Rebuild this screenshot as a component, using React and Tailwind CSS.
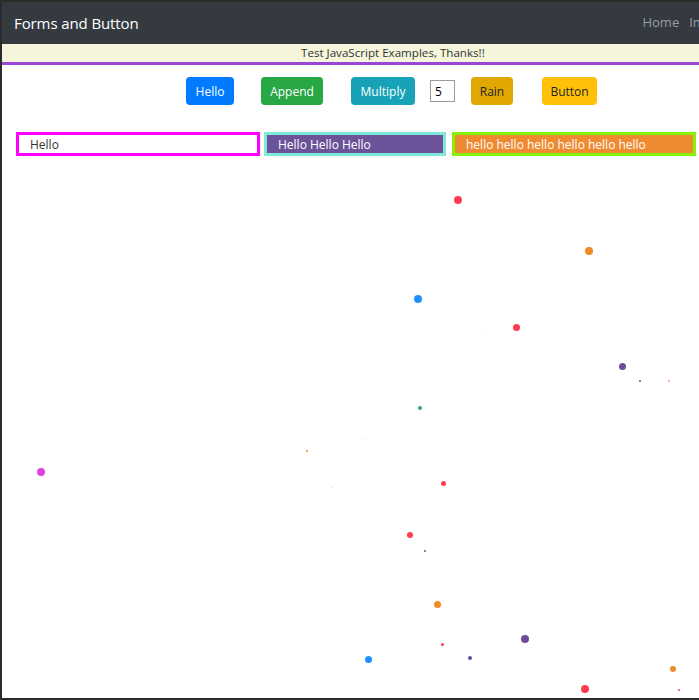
import React from 'react'

const dots = [
  { x: 458, y: 200, s: 8, c: '#ff3b50' },
  { x: 589, y: 251, s: 8, c: '#ef8a26' },
  { x: 418, y: 299, s: 8, c: '#1e90ff' },
  { x: 516, y: 327, s: 7, c: '#ff3b50' },
  { x: 481, y: 330, s: 1, c: '#d9c6ea' },
  { x: 622, y: 366, s: 7, c: '#6b4c9a' },
  { x: 640, y: 381, s: 2, c: '#6b4c9a' },
  { x: 669, y: 381, s: 2, c: '#ff8ba0' },
  { x: 420, y: 408, s: 4, c: '#2aa58a' },
  { x: 362, y: 438, s: 1, c: '#c8c8c8' },
  { x: 307, y: 451, s: 2, c: '#ef8a26' },
  { x: 41, y: 472, s: 8, c: '#e040e6' },
  { x: 443, y: 483, s: 5, c: '#ff3b50' },
  { x: 332, y: 487, s: 1, c: '#cccccc' },
  { x: 410, y: 535, s: 6, c: '#ff3b50' },
  { x: 425, y: 551, s: 2, c: '#6b4c9a' },
  { x: 437, y: 604, s: 7, c: '#ef8a26' },
  { x: 525, y: 639, s: 8, c: '#6b4c9a' },
  { x: 442, y: 644, s: 3, c: '#ff3b50' },
  { x: 470, y: 658, s: 4, c: '#6b4c9a' },
  { x: 368, y: 659, s: 7, c: '#1e90ff' },
  { x: 673, y: 669, s: 6, c: '#ef8a26' },
  { x: 585, y: 689, s: 8, c: '#ff3b50' },
  { x: 679, y: 690, s: 2, c: '#ff3b50' },
]

function Navbar() {
  return (
    <nav className="h-[42px] bg-[#343a40] flex items-center justify-between pl-3 pr-0 overflow-hidden">
      <span className="text-white text-[15px] tracking-[-0.1px]">Forms and Button</span>
      <div className="flex items-center gap-[10px] text-[13px] text-[#9a9da1] mr-[-14px]">
        <span>Home</span>
        <span>Info</span>
      </div>
    </nav>
  )
}

function App() {
  return (
    <div
      className="relative h-[700px] w-[699px] overflow-hidden bg-white border-l-2 border-t-2 border-b-2 border-[#2b2b2b]"
      style={{ fontFamily: '"Open Sans", "Noto Sans", sans-serif' }}
    >
      <Navbar />

      <div className="h-[21px] bg-[#f5f5dc] border-b-[3px] border-[#9b45d6] pl-[299px] text-[11.6px] leading-[18px] text-[#333]">
        Test JavaScript Examples, Thanks!!
      </div>

      {/* Buttons */}
      <div className="flex items-center mt-[12px] pl-[184px] text-[12px] leading-none">
        <button className="h-[28px] w-[48px] rounded bg-[#007bff] text-white pt-[2px]">Hello</button>
        <button className="h-[28px] w-[62px] rounded bg-[#28a745] text-white ml-[27px] pt-[2px]">Append</button>
        <button className="h-[28px] w-[64px] rounded bg-[#17a2b8] text-white ml-[28px] pt-[2px]">Multiply</button>
        <input
          defaultValue="5"
          className="h-[22px] w-[25px] ml-[15px] border border-[#9a9a9a] pl-[4px] text-[12px] text-black outline-none"
        />
        <button className="h-[28px] w-[42px] rounded bg-[#e0a800] text-[#212529] ml-[16px] pt-[2px]">Rain</button>
        <button className="h-[28px] w-[55px] rounded bg-[#ffc107] text-[#212529] ml-[29px] pt-[2px]">Button</button>
      </div>

      {/* Text fields */}
      <div className="flex mt-[27px] pl-[14px] text-[12px]">
        <input
          defaultValue="Hello"
          className="h-[24px] w-[244px] border-[3px] border-[#ff00ff] bg-white pl-[11px] text-[#333] outline-none"
        />
        <input
          defaultValue="Hello Hello Hello"
          className="h-[24px] w-[182px] ml-[4px] border-[3px] border-[#7fe8d6] bg-[#6c5299] pl-[11px] text-white outline-none"
        />
        <input
          defaultValue="hello hello hello hello hello hello"
          className="h-[24px] w-[244px] ml-[6px] border-[3px] border-[#86f20a] bg-[#f08a30] pl-[11px] text-white outline-none"
        />
      </div>

      {/* Rain drops */}
      {dots.map((d, i) => (
        <span
          key={i}
          className="absolute rounded-full"
          style={{
            left: d.x - 2 - d.s / 2,
            top: d.y - 2 - d.s / 2,
            width: d.s,
            height: d.s,
            background: d.c,
          }}
        />
      ))}
    </div>
  )
}

export default App
